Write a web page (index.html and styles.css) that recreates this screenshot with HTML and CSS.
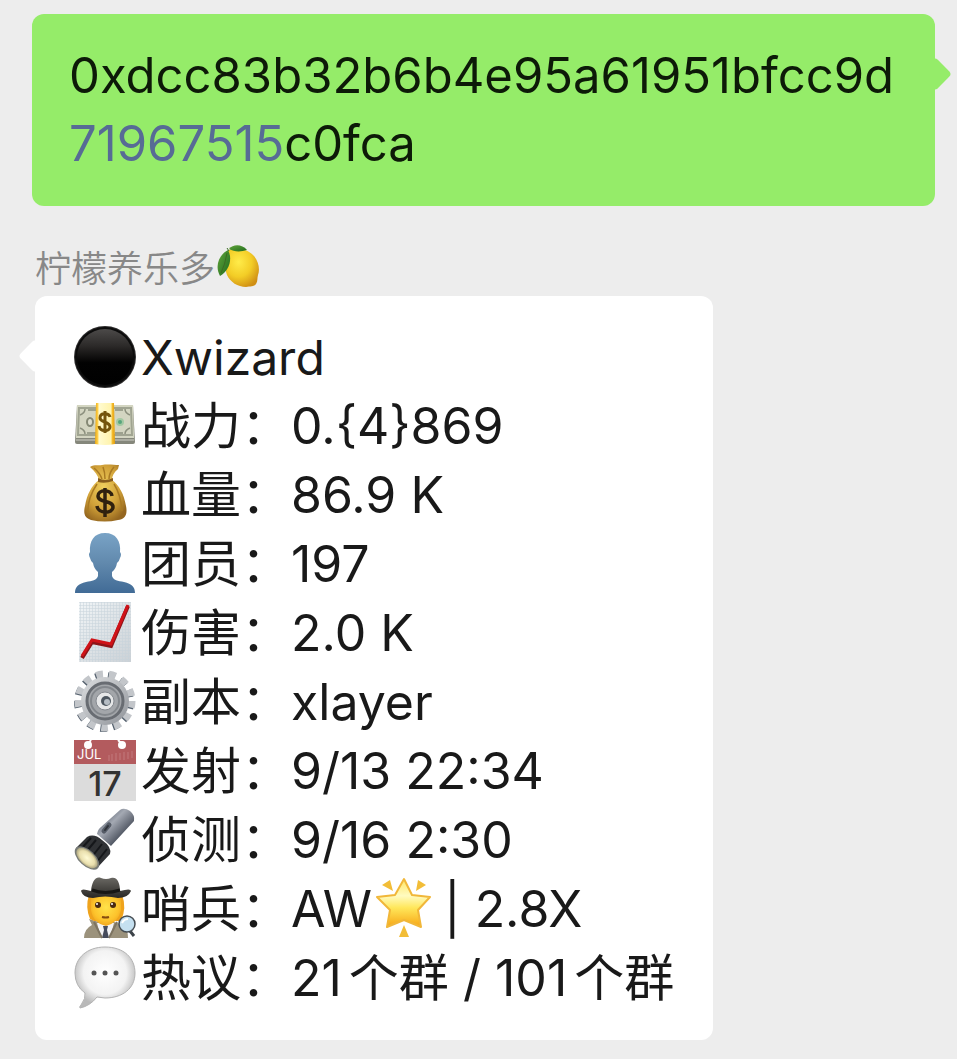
FILE: index.html
```html
<!DOCTYPE html>
<html lang="zh-CN">
<head>
<meta charset="utf-8">
<meta name="viewport" content="width=device-width, initial-scale=1">
<title>柠檬养乐多</title>
<link rel="stylesheet" href="styles.css">
</head>
<body>
<main class="chat">
  <article class="bubble sent">
    <p class="address">0xdcc83b32b6b4e95a61951bfcc9d<wbr><a class="number" href="tel:71967515">71967515</a>c0fca</p>
  </article>

  <section class="incoming">
    <header class="sender">
      <span>柠檬养乐多</span>
      <svg class="lemon" viewBox="0 0 43 43" role="img" aria-label="柠檬">
        <defs>
          <radialGradient id="lemonSkin" cx=".4" cy=".35" r=".7"><stop offset="0" stop-color="#ffec4a"/><stop offset=".55" stop-color="#f3cd26"/><stop offset="1" stop-color="#d08f14"/></radialGradient>
          <linearGradient id="leaf" x2="1" y2="1"><stop offset="0" stop-color="#63a53c"/><stop offset="1" stop-color="#1e6b1c"/></linearGradient>
        </defs>
        <path d="M12 5C19 2 30 4 36 10C42 16 43 25 41 30C40 33 41 36 39 39C37 42 33 41 29 42C21 42 13 37 10 30C7 22 8 9 12 5Z" fill="url(#lemonSkin)"/>
        <path d="M12 4C16-1 25-1 30 5C24 7 17 7 12 4Z" fill="url(#leaf)"/>
        <path d="M11 5C3 9-3 20 3 31C12 26 16 14 11 5Z" fill="url(#leaf)"/>
        <path d="M10 8Q8 20 4 28M12 6L10 3" fill="none" stroke="#3c6b25" stroke-width="1"/>
      </svg>
    </header>

    <article class="bubble received">
      <ul class="facts">
        <li class="fact name">
          <svg class="icon" viewBox="0 0 62 62" aria-hidden="true">
            <defs><linearGradient id="ball" x2="0" y2="1"><stop offset="0" stop-color="#4c4a49"/><stop offset=".3" stop-color="#2c2a29"/><stop offset=".6" stop-color="#020202"/><stop offset="1" stop-color="#000"/></linearGradient></defs>
            <circle cx="31" cy="31" r="31" fill="#2f2e2e"/><circle cx="31" cy="31" r="30" fill="#0c0c0c"/><circle cx="31" cy="31" r="28" fill="url(#ball)"/>
          </svg>
          <span>Xwizard</span>
        </li>
        <li class="fact">
          <svg class="icon" viewBox="0 0 62 62" aria-hidden="true">
            <defs><linearGradient id="strap" x2="1" y2="0"><stop offset="0" stop-color="#e7a713"/><stop offset=".14" stop-color="#ffd04a"/><stop offset=".2" stop-color="#fffbd0"/><stop offset=".8" stop-color="#fff3ac"/><stop offset=".86" stop-color="#f5bd2e"/><stop offset="1" stop-color="#e19c0b"/></linearGradient></defs>
            <path d="M3 10H59L61 47Q61 49 59 49H3Q1 49 1 47Z" fill="#85877b"/>
            <path d="M3 10H59L60 43H2Z" fill="#d3d5c1"/>
            <path d="M5 13H57L58 40H4Z" fill="none" stroke="#a0a491" stroke-width="2"/>
            <path d="M2 45H60" stroke="#d0d0c7" stroke-width="1"/>
            <path d="M6 20Q11 18 11 14M6 33Q11 35 11 39M56 20Q51 18 51 14M56 33Q51 35 51 39M14 15H22M41 15H49M13 38H22M41 38H49" fill="none" stroke="#8c907e" stroke-width="1.5"/>
            <ellipse cx="16" cy="27" rx="3" ry="4" fill="#dedfce" stroke="#858975" stroke-width="2"/>
            <circle cx="46" cy="27" r="4" fill="#a3c9a3"/><circle cx="46" cy="27" r="2" fill="#57a47c"/>
            <path d="M22 8H40L41 49Q31 51 21 49Z" fill="url(#strap)"/>
            <path d="M36 22C35 18 26 17 26 23C26 28 36 26 36 32C36 37 26 37 25 31M31 16V38" fill="none" stroke="#74550c" stroke-width="3"/>
          </svg>
          <span>战力：0.{4}869</span>
        </li>
        <li class="fact">
          <svg class="icon" viewBox="0 0 62 62" aria-hidden="true">
            <defs><radialGradient id="bag" cx=".45" cy=".4" r=".65"><stop offset="0" stop-color="#f0cf5e"/><stop offset=".6" stop-color="#d0a038"/><stop offset="1" stop-color="#94661f"/></radialGradient></defs>
            <path d="M16 3C21 0 24 2 28 1C34 0 40 1 45 1L44 5C40 8 38 12 38 16C45 21 50 30 52 42C54 52 50 55 44 56Q31 59 17 56C11 54 9 50 11 42C13 30 18 21 25 16C24 12 21 7 16 3Z" fill="url(#bag)"/>
            <path d="M20 4Q26 9 28 15M29 3Q31 8 31 15M40 3Q35 9 35 15M23 20Q13 35 14 49M40 20Q47 31 48 47" fill="none" stroke="#a97a22" stroke-width="1.5"/>
            <path d="M24 14Q31 18 39 14V17Q31 20 24 18Z" fill="#875c1d"/>
            <path d="M38 32C37 25 24 25 24 32C24 39 39 36 39 43C39 50 24 50 23 42M31 24V53" fill="none" stroke="#30210f" stroke-width="3.5"/>
          </svg>
          <span>血量：86.9 K</span>
        </li>
        <li class="fact">
          <svg class="icon" viewBox="0 0 62 62" aria-hidden="true">
            <defs><linearGradient id="person" x2="0" y2="1"><stop offset="0" stop-color="#79a3c6"/><stop offset=".5" stop-color="#6189ad"/><stop offset="1" stop-color="#416b96"/></linearGradient></defs>
            <path d="M31 0C42 0 47 8 46 19Q48 21 46 25Q45 29 43 30Q42 36 38 39V43C39 47 44 48 50 49C58 51 61 54 61 60H1C1 54 4 51 12 49C18 48 23 47 24 43V39Q20 36 19 30Q17 29 16 25Q14 21 16 19C15 8 20 0 31 0Z" fill="url(#person)"/>
          </svg>
          <span>团员：197</span>
        </li>
        <li class="fact">
          <svg class="icon" viewBox="0 0 62 62" aria-hidden="true">
            <defs>
              <linearGradient id="paper" x2="1" y2="1"><stop offset="0" stop-color="#f1f5f7"/><stop offset="1" stop-color="#cbd1d6"/></linearGradient>
              <pattern id="grid" width="3" height="3" patternUnits="userSpaceOnUse"><path d="M0 0H3M0 0V3" stroke="#c6d2da" stroke-width="1"/></pattern>
            </defs>
            <rect x="5" width="52" height="60" fill="url(#paper)"/><rect x="5" width="52" height="60" fill="url(#grid)"/>
            <path d="M8 56L18 40L37 44L54 4" fill="none" stroke="#8e1418" stroke-width="4"/>
            <path d="M8 54L18 38L37 42L54 3" fill="none" stroke="#d01218" stroke-width="3"/>
          </svg>
          <span>伤害：2.0 K</span>
        </li>
        <li class="fact">
          <svg class="icon" viewBox="0 0 62 62" aria-hidden="true">
            <defs><linearGradient id="steel" x2="1" y2="1"><stop offset="0" stop-color="#dcdee0"/><stop offset=".55" stop-color="#b4b7bb"/><stop offset="1" stop-color="#8d9197"/></linearGradient></defs>
            <circle cx="30" cy="31" r="26" fill="none" stroke="#56626f" stroke-width="8" stroke-dasharray="6.6 5.966"/>
            <circle cx="31" cy="30" r="26" fill="none" stroke="#c3c6ca" stroke-width="9" stroke-dasharray="6.6 5.966"/>
            <circle cx="31" cy="30" r="24" fill="url(#steel)"/>
            <circle cx="31" cy="30" r="18" fill="#a3a6aa" stroke="#686c72" stroke-width="3"/>
            <circle cx="31" cy="30" r="14" fill="none" stroke="#83878c" stroke-width="2"/>
            <circle cx="31" cy="30" r="9" fill="#e6e7e8" stroke="#85898f" stroke-width="1"/>
            <circle cx="32" cy="30" r="5" fill="#4d565f"/><circle cx="33" cy="31" r="3" fill="#b6bdc4"/>
          </svg>
          <span>副本：xlayer</span>
        </li>
        <li class="fact">
          <svg class="icon" viewBox="0 0 62 62" aria-hidden="true">
            <rect width="62" height="61" fill="#dcdcdc"/><path d="M0 0H62V24H0Z" fill="#b35b5e"/>
            <path d="M14 4L17 0M48 4L44 0" stroke="#fff" stroke-width="2"/><circle cx="14" cy="5" r="4" fill="#fff"/><circle cx="48" cy="5" r="4" fill="#fff"/>
            <path d="M35 15V21M38 14V21M42 13V21M46 13V20M50 12V20M54 12V19M58 11V18" stroke="#c27b7d" stroke-width="1"/>
            <text class="month" x="3" y="19">JUL</text><text class="day" x="31" y="56">17</text>
          </svg>
          <span>发射：9/13 22:34</span>
        </li>
        <li class="fact">
          <svg class="icon" viewBox="0 0 62 62" aria-hidden="true">
            <defs>
              <linearGradient id="barrel" gradientUnits="userSpaceOnUse" x1="27" y1="14" x2="43" y2="30"><stop offset="0" stop-color="#777e8a"/><stop offset=".35" stop-color="#a4a9b3"/><stop offset="1" stop-color="#555b67"/></linearGradient>
              <radialGradient id="beam"><stop offset="0" stop-color="#fffbd5"/><stop offset=".7" stop-color="#e9dfad"/><stop offset="1" stop-color="#aaa37f"/></radialGradient>
            </defs>
            <path d="M46 1Q50-2 56 2Q61 6 60 12L37 37L23 25Q24 20 27 18Z" fill="url(#barrel)"/>
            <path d="M13 28Q20 24 28 31Q38 38 36 45L24 58L2 39Z" fill="#303235"/>
            <path d="M17 29L8 39M22 31L12 43M28 35L17 49M33 40L22 54" stroke="#15171a" stroke-width="2"/>
            <ellipse cx="13" cy="49" rx="15" ry="8" transform="rotate(43 13 49)" fill="#777b77"/>
            <ellipse cx="13" cy="49" rx="13" ry="7" transform="rotate(43 13 49)" fill="url(#beam)"/>
            <path d="M30 22L35 16" stroke="#555b66" stroke-width="5" stroke-linecap="round"/><path d="M31 21L34 17" stroke="#30343b" stroke-width="2" stroke-linecap="round"/>
          </svg>
          <span>侦测：9/16 2:30</span>
        </li>
        <li class="fact">
          <svg class="icon" viewBox="0 0 62 62" aria-hidden="true">
            <defs>
              <radialGradient id="face" cx=".5" cy=".4" r=".6"><stop offset="0" stop-color="#ffe34a"/><stop offset=".7" stop-color="#fdc32c"/><stop offset="1" stop-color="#f0a51c"/></radialGradient>
              <linearGradient id="hat" x2="0" y2="1"><stop offset="0" stop-color="#6a6863"/><stop offset="1" stop-color="#292825"/></linearGradient>
            </defs>
            <path d="M10 60Q10 51 18 47L15 41L25 44H40L49 47Q54 51 54 60Z" fill="#9b927c"/>
            <path d="M23 45H40L36 60H27Z" fill="#f3f3f5"/><path d="M29 48H34L33 52L35 60H28L30 52Z" fill="#454b5c"/>
            <path d="M20 44L28 60M43 44L35 60" stroke="#7d7461" stroke-width="2"/>
            <path d="M15 17Q11 29 16 41L20 43L47 43Q53 29 48 17Z" fill="#efa31c"/>
            <path d="M17 17H47V32Q44 45 32 48Q19 45 17 32Z" fill="url(#face)"/>
            <circle cx="24" cy="27" r="3" fill="#4b2a10"/><circle cx="39" cy="27" r="3" fill="#4b2a10"/>
            <circle cx="23" cy="26" r="1" fill="#fff"/><circle cx="38" cy="26" r="1" fill="#fff"/>
            <path d="M28 39Q32 40 35 39" fill="none" stroke="#854b0e" stroke-width="2"/>
            <path d="M17 13C18 4 21-2 27 0Q32 2 37 0C43-2 46 5 46 13Q57 10 57 13Q54 20 44 20Q31 17 19 20Q9 20 7 13Q7 10 17 13Z" fill="url(#hat)"/>
            <path d="M18 12Q31 17 46 12" stroke="#171715" stroke-width="3" fill="none"/>
            <path d="M56 53L60 58" stroke="#3c4248" stroke-width="3"/><circle cx="53" cy="46" r="8" fill="#c5e0f0" stroke="#464d53" stroke-width="1.5"/><path d="M48 45Q50 41 54 41" fill="none" stroke="#fff" stroke-width="2"/>
          </svg>
          <span>哨兵：AW</span>
          <svg class="icon star" viewBox="0 0 62 62" role="img" aria-label="星">
            <defs><linearGradient id="gold" x2="0" y2="1"><stop offset="0" stop-color="#ffe564"/><stop offset=".35" stop-color="#fffbc0"/><stop offset=".6" stop-color="#ffe75a"/><stop offset="1" stop-color="#f7a514"/></linearGradient></defs>
            <path d="M31 1L39 17L57 19L45 32L48 49L31 42L14 49L17 32L4 19L22 17Z" fill="url(#gold)" stroke="#f1b739" stroke-width="2" stroke-linejoin="round"/>
            <path d="M9 7L17 2L20 13ZM45 2L53 7L43 13ZM31 47L36 59H26Z" fill="#f2bd37"/>
          </svg>
          <span>| 2.8X</span>
        </li>
        <li class="fact">
          <svg class="icon" viewBox="0 0 62 62" aria-hidden="true">
            <defs><radialGradient id="speech" cx=".5" cy=".42" r=".55"><stop offset="0" stop-color="#fff"/><stop offset=".65" stop-color="#f3f3f3"/><stop offset="1" stop-color="#b9b9b9"/></radialGradient></defs>
            <path d="M31 0C50 0 61 11 61 26C61 42 48 51 31 51L23 50Q16 59 6 61Q5 60 7 58Q12 51 11 46Q1 39 1 26C1 11 13 0 31 0Z" fill="url(#speech)" stroke="#b3b3b3" stroke-width="1"/>
            <circle cx="20" cy="26" r="2.5" fill="#555"/><circle cx="31" cy="26" r="2.5" fill="#555"/><circle cx="42" cy="26" r="2.5" fill="#555"/>
          </svg>
          <span>热议：<span class="count">21</span>个群 / <span class="count">101</span>个群</span>
        </li>
      </ul>
    </article>
  </section>
</main>
</body>
</html>
```

FILE: styles.css
```css
* {
  box-sizing: border-box;
}

body {
  margin: 0;
  background: #ededed;
  color: #191919;
  font-family: Inter, "Noto Sans CJK SC", sans-serif;
  font-size: 50px;
}

.chat {
  padding: 14px 22px 19px 32px;
}

.bubble {
  position: relative;
  border-radius: 12px;
}

.bubble::before {
  content: "";
  position: absolute;
  top: 48px;
  width: 24px;
  height: 24px;
  border-radius: 4px;
  background: inherit;
  transform: rotate(45deg);
}

.sent {
  padding: 28px 20px 28px 37px;
  background: #95ec69;
  color: #0d1a08;
}

.sent::before {
  right: -12px;
}

.address {
  margin: 0;
  font-size: 49px;
  line-height: 68px;
}

.number {
  color: #576b95;
  text-decoration: none;
}

.incoming {
  margin-top: 36px;
  padding-left: 3px;
}

.sender {
  display: flex;
  align-items: center;
  gap: 2px;
  height: 54px;
  padding-bottom: 6px;
  color: #888;
  font-size: 36px;
  font-weight: 350;
}

.lemon {
  width: 43px;
  height: 43px;
}

.received {
  width: fit-content;
  padding: 27px 39px;
  background: #fff;
}

.received::before {
  left: -12px;
}

.facts {
  margin: 0;
  padding: 0;
  list-style: none;
}

.fact {
  display: flex;
  align-items: center;
  gap: 5px;
  height: 69px;
  line-height: 69px;
  white-space: nowrap;
}

.name {
  font-size: 48px;
}

.icon {
  flex: none;
  width: 62px;
  height: 62px;
  margin-bottom: 2px;
  overflow: visible;
}

.star {
  margin: 0 4px 2px -4px;
}

.count {
  margin-right: 7px;
}

.month {
  fill: #fff;
  font-size: 13px;
}

.day {
  fill: #333;
  font-size: 34px;
  font-weight: 500;
  text-anchor: middle;
}
```
